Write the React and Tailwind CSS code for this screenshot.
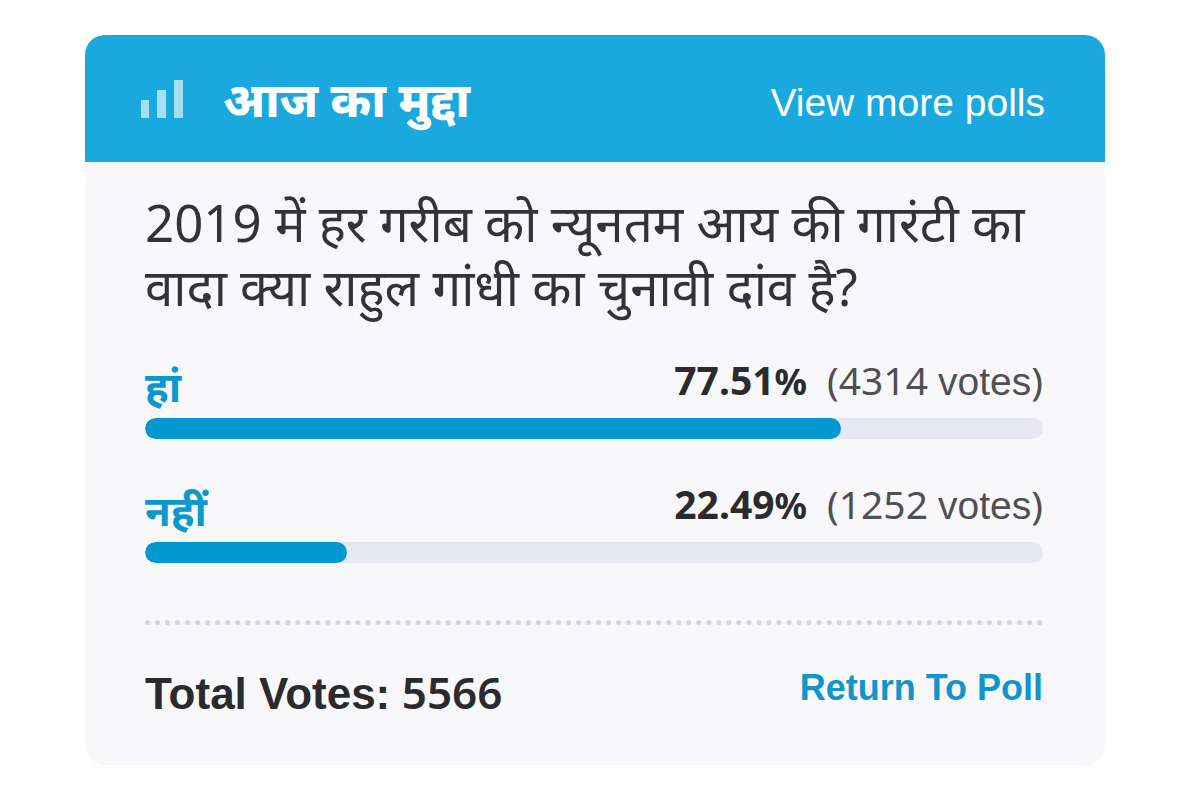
import React from 'react';

const poll = {
  title: 'आज का मुद्दा',
  question: '2019 में हर गरीब को न्यूनतम आय की गारंटी का वादा क्या राहुल गांधी का चुनावी दांव है?',
  options: [
    { id: 'yes', label: 'हां', percent: 77.51, votes: 4314 },
    { id: 'no', label: 'नहीं', percent: 22.49, votes: 1252 },
  ],
};

const totalVotes = poll.options.reduce((sum, o) => sum + o.votes, 0);

function BarsIcon() {
  return (
    <svg width="42" height="38" viewBox="0 0 42 38" fill="#a6def4" aria-hidden="true">
      <rect x="0" y="20" width="8" height="18" />
      <rect x="16" y="10" width="9" height="28" />
      <rect x="33" y="0" width="9" height="38" />
    </svg>
  );
}

function PollOption({ option }) {
  return (
    <li>
      <div className="flex items-start justify-between mb-[2px]">
        <span className="text-[42px] leading-[60px] font-bold text-[#0b98cc]">{option.label}</span>
        <span className="text-[39px] leading-[48px] text-[#505052]">
          <strong className="mr-5 font-bold text-[#2b2b2d]">
            {option.percent}
            <span className="text-[36px]">%</span>
          </strong>
          ({option.votes} <span className="font-['Liberation_Sans',sans-serif]">votes</span>)
        </span>
      </div>
      <div className="h-[21px] rounded-full bg-[#e7e7f2] overflow-hidden">
        <div className="h-full rounded-full bg-[#0098ce]" style={{ width: `${option.percent}%` }} />
      </div>
    </li>
  );
}

export default function App() {
  return (
    <main className="min-h-screen bg-white pl-[85px] pr-[95px] pt-[35px] pb-[45px] font-['Noto_Sans',sans-serif]">
      <section className="w-full max-w-[1020px] mx-auto rounded-[20px] overflow-hidden bg-[#f8f8fb]">
        <header className="flex items-center justify-between h-[127px] pl-14 pr-[60px] bg-[#1aa9de] text-white">
          <div className="flex items-center gap-10">
            <BarsIcon />
            <h1 className="text-[48px] leading-[60px] font-extrabold">{poll.title}</h1>
          </div>
          <a href="#polls" className="pt-2 text-[39px] leading-[52px] font-['Liberation_Sans',sans-serif]">View more polls</a>
        </header>

        <div className="pl-[60px] pr-[62px] pt-7 pb-[41px]">
          <h2 className="text-[51px] leading-[64px] text-[#333335]">{poll.question}</h2>
          <ul className="mt-[38px] space-y-[41px]">
            {poll.options.map((o) => (
              <PollOption key={o.id} option={o} />
            ))}
          </ul>
          <footer className="flex items-start justify-between mt-[57px] pt-[37px] border-t-5 border-dotted border-[#d6d6da]">
            <p className="text-[44px] leading-[60px] font-semibold text-[#2b2b2d]">
              <span className="font-['Liberation_Sans',sans-serif]">Total Votes:</span> {totalVotes}
            </p>
            <a href="#poll" className="text-[36px] leading-[52px] font-bold text-[#1295cb] font-['Liberation_Sans',sans-serif]">
              Return To Poll
            </a>
          </footer>
        </div>
      </section>
    </main>
  );
}
